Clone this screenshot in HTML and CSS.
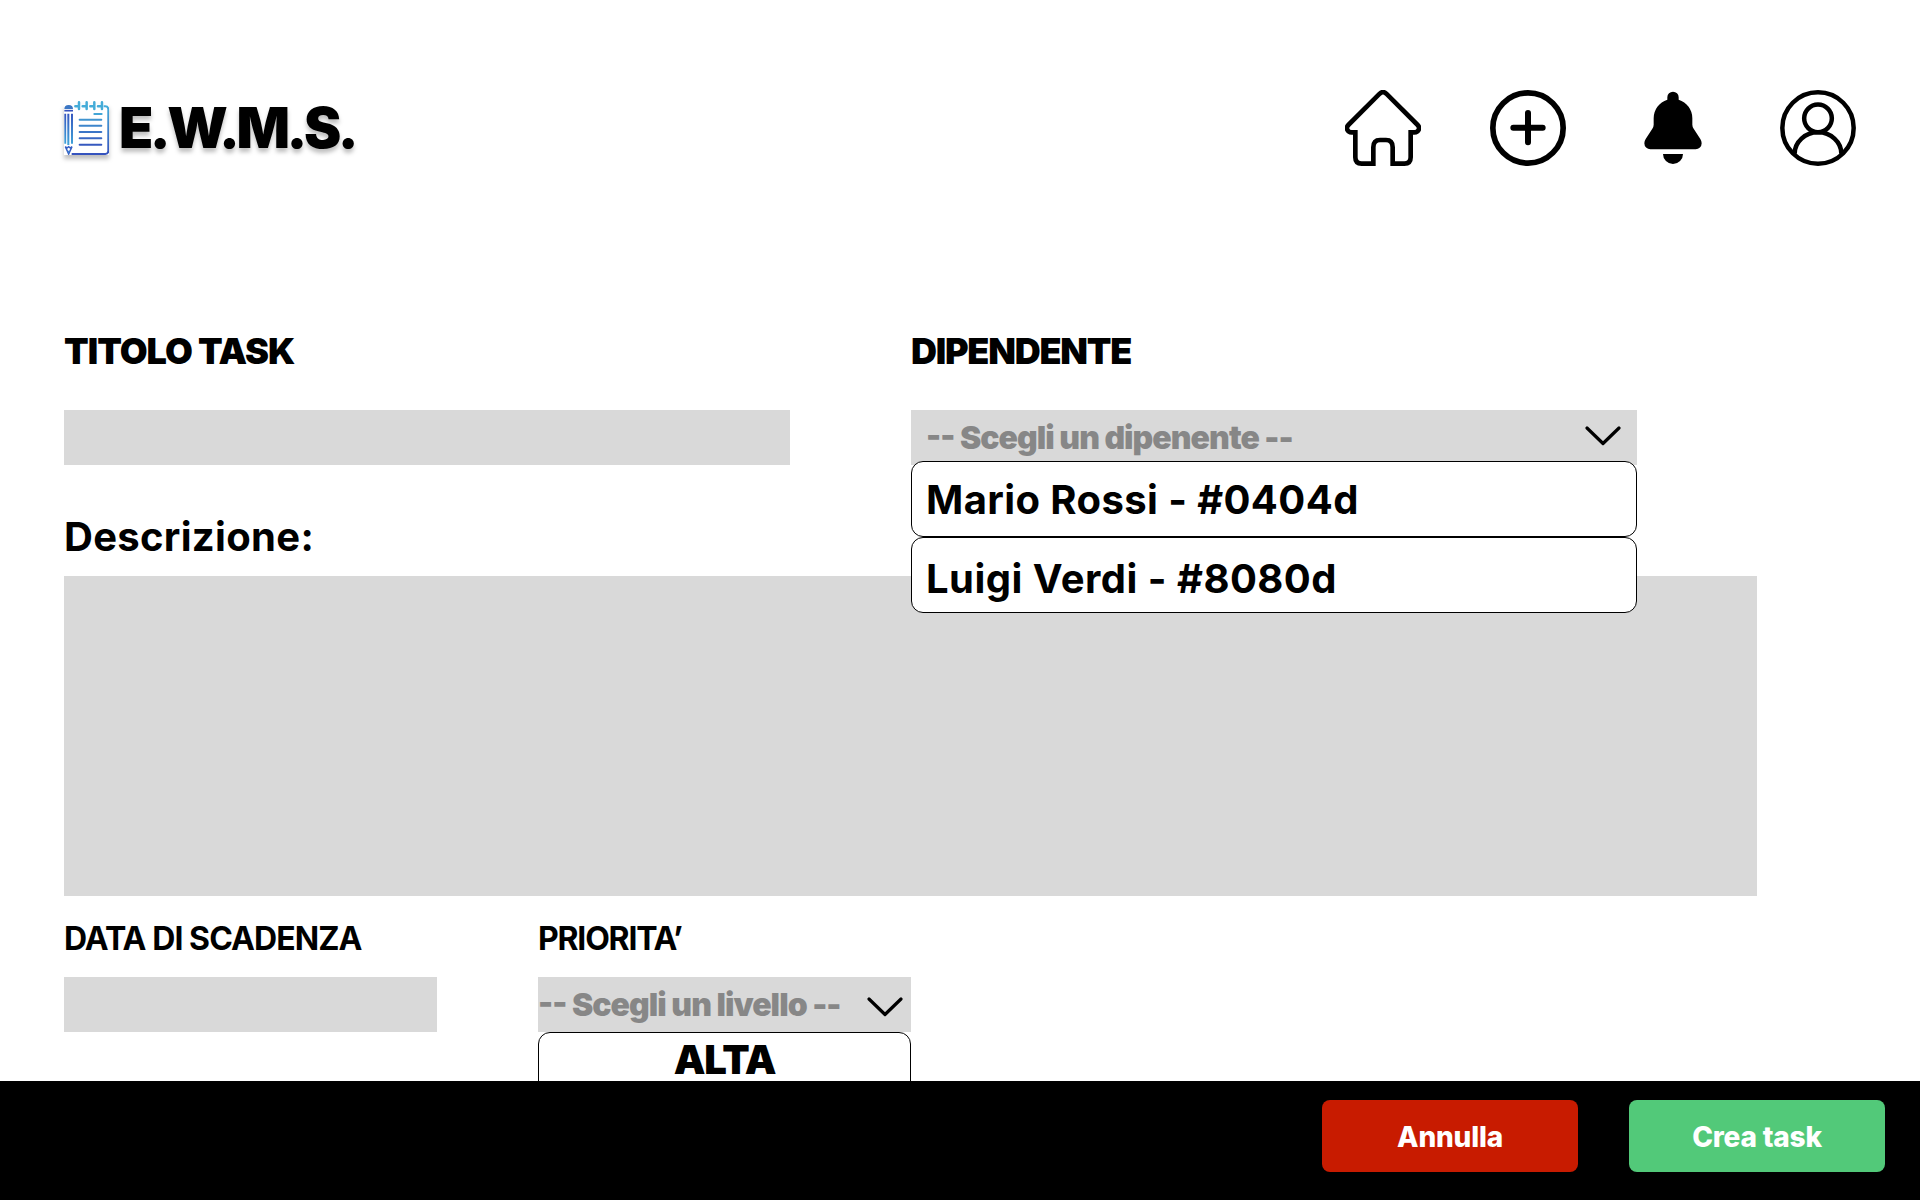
FILE: index.html
```html
<!DOCTYPE html>
<html lang="it">
<head>
<meta charset="utf-8">
<title>E.W.M.S.</title>
<link rel="stylesheet" href="styles.css">
</head>
<body>
<main class="page">
  <header class="header">
    <div class="brand">
      <svg class="logo" viewBox="26 18 136 164" fill="none">
        <defs>
          <linearGradient id="ink" gradientUnits="userSpaceOnUse" x1="0" y1="20" x2="0" y2="180"><stop offset="0" stop-color="#45b4dc"/><stop offset="1" stop-color="#3551bd"/></linearGradient>
          <linearGradient id="wood" gradientUnits="userSpaceOnUse" x1="0" y1="50" x2="0" y2="180"><stop offset="0" stop-color="#3551bd"/><stop offset=".75" stop-color="#3fa2d8"/><stop offset=".85" stop-color="#3551bd"/><stop offset="1" stop-color="#3d7fd0"/></linearGradient>
        </defs>
        <path d="M26 28H162V180H26Z" fill="#fff"/>
        <path d="M145 34H150Q159 34 159 43V168Q159 177 150 177H49" stroke="url(#ink)" stroke-width="6"/>
        <path d="M60 34H68M82 34H91M105 34H114M128 34H137M71 22V42M94 22V42M117 22V42M140 22V42" stroke="#45acd8" stroke-width="7.5" stroke-linecap="round"/>
        <path d="M117 57H139" stroke="#43a5d6" stroke-width="6" stroke-linecap="round"/>
        <path d="M73 74H138" stroke="#4094d0" stroke-width="6" stroke-linecap="round"/>
        <path d="M73 92H138" stroke="#3d85cb" stroke-width="6" stroke-linecap="round"/>
        <path d="M73 111H138" stroke="#3b75c7" stroke-width="6" stroke-linecap="round"/>
        <path d="M73 130H138" stroke="#3867c3" stroke-width="6" stroke-linecap="round"/>
        <path d="M73 149H138" stroke="#3659bf" stroke-width="6" stroke-linecap="round"/>
        <path d="M27 42Q27 30 40 30T53 42Z" fill="#3c77c4"/>
        <path d="M27 47H53" stroke="#3551bd" stroke-width="5"/>
        <path d="M27 56H32.500V146H27ZM36 56H42V150H36ZM47 56H53V146H47Z" fill="url(#wood)"/>
        <path d="M30 155L40 177L50 155L45 159L40 155L35 159Z" stroke="#365fc4" stroke-width="4.500"/>
        <path d="M36 167H44L40 176Z" fill="#3d7fd0"/>
      </svg>
      <span class="brand-name">E.W.M.S.</span>
    </div>
    <nav class="nav">
      <svg class="icon" viewBox="0 0 228 228"><path class="line" stroke-width="14" d="M31 127H20C6 127 2 113 10 105L104 11Q114 2 124 11L218 105C226 113 222 127 208 127H197V202Q197 221 178 221H143V172Q143 150 123 150H105Q85 150 85 172V221H50Q31 221 31 202Z"/></svg>
      <svg class="icon" viewBox="0 0 228 228"><circle class="line" stroke-width="17" cx="114" cy="114" r="105.5"/><path class="line" stroke-width="18" stroke-linecap="round" d="M70 113H158M114 69V157"/></svg>
      <svg class="icon" viewBox="0 0 228 228"><path d="M56 85A58 58 0 0 1 97 29V22A17 17 0 0 1 131 22V29A58 58 0 0 1 172 85V104Q172 110 176 116L196 147Q200 153 200 160A18 18 0 0 1 182 178H46A18 18 0 0 1 28 160Q28 153 32 147L52 116Q56 110 56 104ZM84 192H144A30 30 0 0 1 84 192Z"/></svg>
      <svg class="icon" viewBox="0 0 228 228"><circle class="line" stroke-width="13.5" cx="114" cy="114" r="107"/><circle class="line" stroke-width="13.5" cx="114" cy="85" r="41.5"/><path class="line" stroke-width="13.5" d="M44 191A70 64 0 0 1 184 191"/></svg>
    </nav>
  </header>

  <form class="form">
    <div class="row">
      <div class="field">
        <div class="label strong">TITOLO TASK</div>
        <div class="input"></div>
      </div>
      <div class="field">
        <div class="label strong employee">DIPENDENTE</div>
        <div class="input select wide">
          <span class="placeholder">-- Scegli un dipenente --</span>
          <svg class="chevron" viewBox="0 0 36 20"><path d="M2 2L18 17.5L34 2"/></svg>
          <div class="menu people">
            <div class="option">Mario Rossi - #0404d</div>
            <div class="option low">Luigi Verdi - #8080d</div>
          </div>
        </div>
      </div>
    </div>
    <div class="label description">Descrizione:</div>
    <div class="textarea"></div>
    <div class="row details">
      <div class="field">
        <div class="label small">DATA DI SCADENZA</div>
        <div class="input"></div>
      </div>
      <div class="field">
        <div class="label small priority">PRIORITA’</div>
        <div class="input select">
          <span class="placeholder">-- Scegli un livello --</span>
          <svg class="chevron" viewBox="0 0 36 20"><path d="M2 2L18 17.5L34 2"/></svg>
          <div class="menu levels">
            <div class="option">ALTA</div>
          </div>
        </div>
      </div>
    </div>
  </form>
</main>
<footer class="footer">
  <button class="button cancel">Annulla</button>
  <button class="button create">Crea task</button>
</footer>
</body>
</html>
```
FILE: styles.css
```css
* { box-sizing: border-box; }
body {
  margin: 0;
  height: 1200px;
  display: flex;
  flex-direction: column;
  overflow: hidden;
  background: #fff;
  color: #000;
  font-family: Inter, sans-serif;
  font-feature-settings: "calt" 1;
}
.page { height: 1081px; overflow: hidden; padding: 90px 64px 0; }
.header { display: flex; justify-content: space-between; align-items: center; height: 76px; }
.brand { display: flex; align-items: center; gap: 9.7px; filter: drop-shadow(0 4px 2px rgba(0, 0, 0, .25)); }
.logo { width: 45.3px; height: 54.7px; }
.brand-name { font-size: 56px; line-height: 76px; font-weight: 900; letter-spacing: -3.45px; }
.nav { display: flex; gap: 69px; }
.icon { display: block; width: 76px; height: 76px; }
.line { fill: none; stroke: #000; }

.form { padding-top: 160px; }
.row { display: grid; grid-template-columns: 726px 726px; column-gap: 121px; }
.row.details { grid-template-columns: 373px 373px; column-gap: 101px; padding-top: 18px; }
.label { white-space: nowrap; }
.strong { font-size: 36px; line-height: 50px; font-weight: 900; letter-spacing: -1px; margin-bottom: 34px; }
.employee { letter-spacing: -1.25px; }
.description { font-size: 40px; line-height: 48px; font-weight: 700; letter-spacing: .3px; margin: 48px 0 15px; }
.small { font-size: 32px; line-height: 49px; font-weight: 700; letter-spacing: -.92px; margin-bottom: 14px; }
.priority { letter-spacing: -1.2px; }
.input { height: 55px; background: #d9d9d9; }
.textarea { width: 1693px; height: 320px; background: #d9d9d9; }
.select { position: relative; display: flex; align-items: center; justify-content: space-between; padding: 0 8px 0 0; }
.select.wide { padding: 0 16px 0 15px; }
.placeholder { font-size: 32px; line-height: 55px; font-weight: 900; letter-spacing: -.95px; color: #878787; white-space: nowrap; }
.chevron { width: 36px; height: 20px; margin-top: 4px; fill: none; stroke: #000; stroke-width: 3.2; stroke-linecap: round; stroke-linejoin: round; }
.wide .chevron { margin: 0 0 4px; }
.menu { position: absolute; left: 0; right: 0; top: 100%; z-index: 1; }
.menu.people { top: 51px; }
.option { height: 76px; padding-left: 14px; border: 1px solid #000; border-radius: 12px; background: #fff; font-size: 40px; line-height: 76px; font-weight: 700; letter-spacing: .4px; white-space: nowrap; }
.option.low { padding-top: 3px; letter-spacing: .48px; }
.levels .option { padding: 0; line-height: 53px; font-weight: 900; letter-spacing: -1.3px; text-align: center; }

.footer { height: 119px; background: #000; display: flex; justify-content: flex-end; gap: 51px; padding: 19px 35px 0; }
.button { width: 256px; height: 72px; border: 0; border-radius: 8px; padding: 2px 0 0; color: #fff; font: 800 28px/70px Inter, sans-serif; letter-spacing: -.2px; }
.cancel { background: #c81b00; }
.create { background: #52c979; }
```
